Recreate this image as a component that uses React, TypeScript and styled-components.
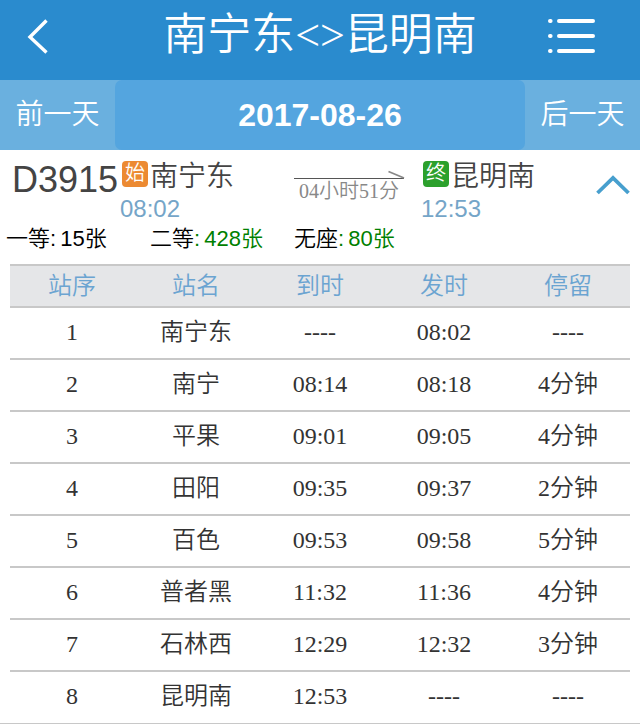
import React from "react";
import styled, { createGlobalStyle } from "styled-components";

const GlobalStyle = createGlobalStyle`
  * { box-sizing: border-box; }
  body { margin: 0; background: #fff; }
`;

const sans = `"Liberation Sans", "Noto Sans CJK SC", sans-serif`;
const serif = `"Liberation Serif", "Noto Sans CJK SC", serif`;

const Page = styled.main`
  width: 640px;
  height: 724px;
  overflow: hidden;
  display: flex;
  flex-direction: column;
  border-bottom: 1px solid #c8c8c8;
  font-family: ${serif};
`;

const Header = styled.header`
  height: 80px;
  flex: none;
  display: grid;
  grid-template-columns: 100px 1fr 100px;
  background: #2a8bce;
  color: #fff;
`;

const IconButton = styled.button<{ $inset: number }>`
  display: flex;
  align-items: flex-start;
  border: 0;
  background: none;
  padding: 17px 0 0 ${(p) => p.$inset}px;
  color: inherit;
`;

const Title = styled.h1`
  margin: 0;
  text-align: center;
  white-space: nowrap;
  font-family: ${serif};
  font-size: 44px;
  font-weight: 350;
  line-height: 72px;
`;

const DateBar = styled.nav`
  height: 70px;
  flex: none;
  display: grid;
  grid-template-columns: 115px 1fr 115px;
  background: #6ab0df;
`;

const DayButton = styled.button`
  border: 0;
  padding: 0;
  background: none;
  color: #fff;
  font: 350 28px/70px ${serif};
`;

const CurrentDate = styled.div`
  border-radius: 7px;
  background: #54a5df;
  color: #fff;
  text-align: center;
  font: bold 32px/70px ${sans};
`;

const Train = styled.section`
  height: 72px;
  flex: none;
  display: grid;
  grid-template-columns: 120px 174px 127px 174px 1fr;
`;

const TrainNumber = styled.div`
  padding-left: 12px;
  white-space: nowrap;
  color: #444;
  font: 36px/60px ${sans};
`;

const Station = styled.div`
  padding-top: 6px;
`;

const StationName = styled.div`
  display: flex;
  gap: 2px;
  height: 39px;
  padding-left: 2px;
  color: #444;
  font: 350 28px/41px ${serif};
`;

const Badge = styled.span<{ $color: string }>`
  width: 26px;
  height: 26px;
  margin-top: 5px;
  border-radius: 4px;
  background: ${(p) => p.$color};
  color: #fff;
  text-align: center;
  font-size: 20px;
  line-height: 24px;
`;

const StationTime = styled.div`
  color: #75a5c8;
  font: 24px/28px ${sans};
`;

const Duration = styled.div`
  width: 112px;
  padding: 18px 2px 0 0;
  color: #888;
  text-align: center;
  font: 350 20px/22px ${serif};
  svg { display: block; }
`;

const Toggle = styled.button`
  padding: 25px 0 0 1px;
  border: 0;
  background: none;
  display: flex;
  align-items: flex-start;
`;

const Seats = styled.div`
  height: 42px;
  flex: none;
  display: grid;
  grid-template-columns: repeat(3, 144px);
  padding-left: 6px;
  color: #000;
  font: 350 22px/34px ${sans};
  word-spacing: -2px;
`;

const SeatCount = styled.span<{ $available?: boolean }>`
  color: ${(p) => (p.$available ? "#008000" : "#000")};
`;

const Table = styled.table`
  width: 620px;
  margin: 0 10px;
  table-layout: fixed;
  border-spacing: 0;
  color: #333;
  font-size: 24px;
  font-weight: 350;
`;

const HeadCell = styled.th`
  height: 44px;
  padding: 0;
  border-top: 2px solid #c8c8c8;
  border-bottom: 2px solid #c8c8c8;
  background: #e5e6e8;
  color: #6ba4d1;
  font-weight: 350;
  line-height: 40px;
`;

const Cell = styled.td`
  height: 52px;
  padding: 0 0 2px;
  border-bottom: 2px solid #c8c8c8;
  text-align: center;
  line-height: 48px;
  tr:last-child & { border-bottom-color: transparent; }
`;

const columns = ["站序", "站名", "到时", "发时", "停留"];

const stops = [
  ["1", "南宁东", "----", "08:02", "----"],
  ["2", "南宁", "08:14", "08:18", "4分钟"],
  ["3", "平果", "09:01", "09:05", "4分钟"],
  ["4", "田阳", "09:35", "09:37", "2分钟"],
  ["5", "百色", "09:53", "09:58", "5分钟"],
  ["6", "普者黑", "11:32", "11:36", "4分钟"],
  ["7", "石林西", "12:29", "12:32", "3分钟"],
  ["8", "昆明南", "12:53", "----", "----"],
];

const seats = [
  { label: "一等", count: "15张", available: false },
  { label: "二等", count: "428张", available: true },
  { label: "无座", count: "80张", available: true },
];

function BackIcon() {
  return (
    <svg width="24" height="38" viewBox="0 0 24 38" fill="none" stroke="#fff" strokeWidth="3.4">
      <path d="M20.500 3.500 4 20l16.500 15.500" />
    </svg>
  );
}

function ListIcon() {
  return (
    <svg width="50" height="38" viewBox="0 0 50 38" stroke="#fff" strokeWidth="4" strokeLinecap="round">
      <path d="M3 4h.6M3 19h.6M3 34h.6M12 4h34M12 19h34M12 34h34" />
    </svg>
  );
}

export default function App() {
  return (
    <>
      <GlobalStyle />
      <Page>
        <Header>
          <IconButton $inset={26} aria-label="返回"><BackIcon /></IconButton>
          <Title>南宁东&lt;&gt;昆明南</Title>
          <IconButton $inset={7} aria-label="菜单"><ListIcon /></IconButton>
        </Header>
        <DateBar>
          <DayButton>前一天</DayButton>
          <CurrentDate>2017-08-26</CurrentDate>
          <DayButton>后一天</DayButton>
        </DateBar>
        <Train>
          <TrainNumber>D3915</TrainNumber>
          <Station>
            <StationName><Badge $color="#ec8a32">始</Badge>南宁东</StationName>
            <StationTime>08:02</StationTime>
          </Station>
          <Duration>
            <svg width="112" height="12" viewBox="0 0 112 12" fill="none">
              <path d="M0 10.500h110" stroke="#555" strokeWidth="1.2" />
              <path d="M94.500 3.500 110 10" stroke="#888" strokeWidth="1.800" />
            </svg>
            04小时51分
          </Duration>
          <Station>
            <StationName><Badge $color="#2ca02c">终</Badge>昆明南</StationName>
            <StationTime>12:53</StationTime>
          </Station>
          <Toggle aria-label="收起">
            <svg width="34" height="21" viewBox="0 0 34 21" fill="none" stroke="#479fce" strokeWidth="3.800">
              <path d="M1.500 18 17 3l15.500 15" />
            </svg>
          </Toggle>
        </Train>
        <Seats>
          {seats.map((s) => (
            <div key={s.label}>
              {s.label}
              <SeatCount $available={s.available}>: {s.count}</SeatCount>
            </div>
          ))}
        </Seats>
        <Table>
          <thead>
            <tr>{columns.map((c) => <HeadCell key={c}>{c}</HeadCell>)}</tr>
          </thead>
          <tbody>
            {stops.map((row) => (
              <tr key={row[0]}>{row.map((v, i) => <Cell key={i}>{v}</Cell>)}</tr>
            ))}
          </tbody>
        </Table>
      </Page>
    </>
  );
}
